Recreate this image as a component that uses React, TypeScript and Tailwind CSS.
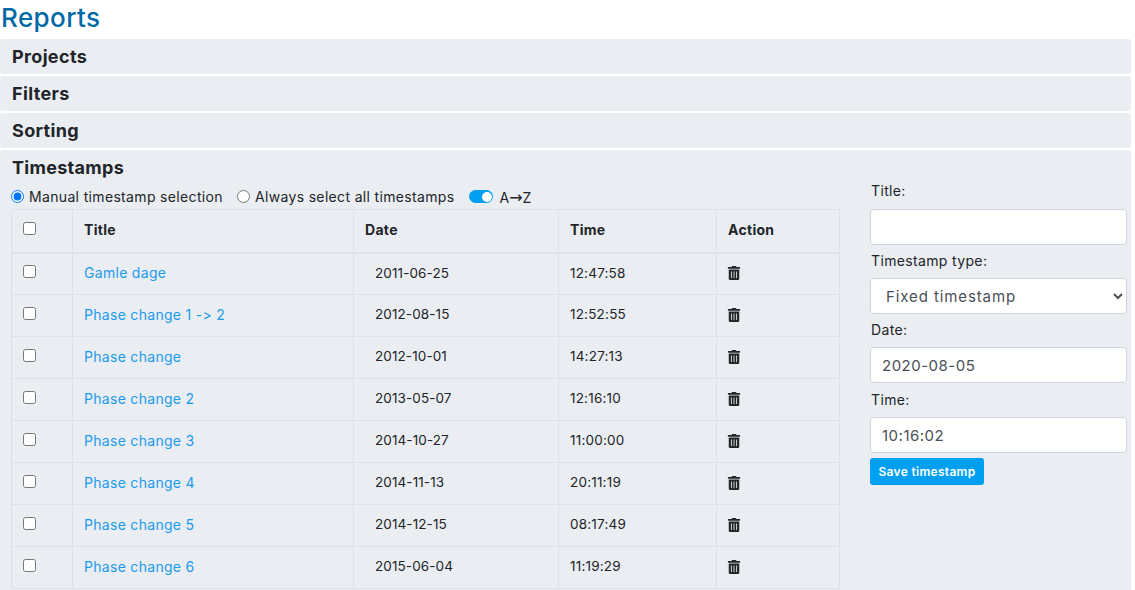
import React from 'react';
import { FaTrashAlt } from 'react-icons/fa';

const rows = [
  { title: 'Gamle dage', date: '2011-06-25', time: '12:47:58' },
  { title: 'Phase change 1 -> 2', date: '2012-08-15', time: '12:52:55' },
  { title: 'Phase change', date: '2012-10-01', time: '14:27:13' },
  { title: 'Phase change 2', date: '2013-05-07', time: '12:16:10' },
  { title: 'Phase change 3', date: '2014-10-27', time: '11:00:00' },
  { title: 'Phase change 4', date: '2014-11-13', time: '20:11:19' },
  { title: 'Phase change 5', date: '2014-12-15', time: '08:17:49' },
  { title: 'Phase change 6', date: '2015-06-04', time: '11:19:29' },
];

const Panel = ({ title }: { title: string }) => (
  <div className="h-[35px] rounded-[3px] bg-[#eaedf1] pl-3 pt-[5px] text-[18px] leading-[26px] font-bold tracking-[0.35px] text-[#212529]">
    {title}
  </div>
);

const inputClass =
  'block h-[36px] w-[257px] rounded-[4px] border border-[#ced4da] bg-white px-[11px] text-[15px] tracking-[0.5px] text-[#495057]';

const labelClass = 'block pl-[1px] leading-[20px] tracking-[0.35px]';
const thClass = 'border border-b-2 border-[#dee2e6] pb-[2px] pl-[11px] text-left font-bold tracking-[0.3px]';
const tdClass = 'border border-[#dee2e6] pb-[2px]';

export default function App() {
  return (
    <div className="h-[590px] w-[1135px] overflow-hidden bg-white font-['Inter',sans-serif] text-[#212529] [font-feature-settings:'calt'_0]">
      <h1 className="h-[39px] pl-[1px] pt-[2px] text-[26px] leading-[32px] font-medium tracking-[0.4px] text-[#0069a6]">Reports</h1>
      <div className="flex w-[1131px] flex-col gap-[2px]">
        <Panel title="Projects" />
        <Panel title="Filters" />
        <Panel title="Sorting" />
        <div className="h-[500px] rounded-[3px] bg-[#eaedf1]">
          <div className="pl-3 pt-[5px] text-[18px] leading-[26px] font-bold tracking-[0.3px]">Timestamps</div>
          <div className="flex">
            <div className="ml-[11px] w-[829px]">
              <div className="flex h-[28px] items-center pt-[3px] text-[14px] tracking-[0.34px]">
                <label className="flex items-center gap-[5px]">
                  <input type="radio" name="sel" defaultChecked className="m-0 h-[13px] w-[13px] accent-[#0075ff]" />
                  Manual timestamp selection
                </label>
                <label className="ml-[14px] flex items-center gap-[5px]">
                  <input type="radio" name="sel" className="m-0 h-[13px] w-[13px]" />
                  Always select all timestamps
                </label>
                <span className="ml-[14px] flex h-[13px] w-[24px] items-center justify-end rounded-full bg-[#009ff0] pr-[1px]">
                  <span className="h-[10px] w-[10px] rounded-full bg-white" />
                </span>
                <span className="ml-[7px] mt-[2px] tracking-normal">
                  A<span className="font-['DejaVu_Sans',sans-serif] text-[16px] leading-[14px]">→</span>Z
                </span>
              </div>
              <table className="w-[828px] table-fixed border-collapse text-[14px]">
                <colgroup>
                  <col className="w-[61px]" />
                  <col className="w-[281px]" />
                  <col className="w-[205px]" />
                  <col className="w-[158px]" />
                  <col className="w-[123px]" />
                </colgroup>
                <thead>
                  <tr className="h-[43px]">
                    <th className="border border-b-2 border-[#dee2e6] pb-[4px] pl-[11px] text-left align-middle">
                      <input type="checkbox" className="m-0 block h-[13px] w-[13px]" />
                    </th>
                    <th className={thClass}>Title</th>
                    <th className={thClass}>Date</th>
                    <th className={thClass}>Time</th>
                    <th className={thClass}>Action</th>
                  </tr>
                </thead>
                <tbody>
                  {rows.map((r) => (
                    <tr key={r.title} className="h-[42px]">
                      <td className="border border-[#dee2e6] pb-[4px] pl-[11px]">
                        <input type="checkbox" className="m-0 block h-[13px] w-[13px]" />
                      </td>
                      <td className={`${tdClass} pl-[11px] tracking-[0.3px] text-[#1a9bef]`}>{r.title}</td>
                      <td className={`${tdClass} pl-[21px] text-[13.5px] tracking-[0.1px]`}>{r.date}</td>
                      <td className={`${tdClass} pl-[11px] text-[13.5px] tracking-[0.2px]`}>{r.time}</td>
                      <td className={`${tdClass} pl-[10px]`}>
                        <FaTrashAlt className="text-[14px]" />
                      </td>
                    </tr>
                  ))}
                </tbody>
              </table>
            </div>
            <div className="ml-[30px] w-[257px] text-[14px]">
              <label className={`${labelClass} h-[28px]`}>Title:</label>
              <input type="text" className={inputClass} />
              <label className={`${labelClass} h-[33px] pt-[6px]`}>Timestamp type:</label>
              <select defaultValue="fixed" className={`${inputClass} tracking-[0.9px]`}>
                <option value="fixed">Fixed timestamp</option>
              </select>
              <label className={`${labelClass} h-[33px] pt-[6px]`}>Date:</label>
              <input type="text" defaultValue="2020-08-05" className={inputClass} />
              <label className={`${labelClass} h-[34px] pt-[7px]`}>Time:</label>
              <input type="text" defaultValue="10:16:02" className={`${inputClass} tracking-[0.3px]`} />
              <button className="mt-[5px] h-[27px] w-[114px] rounded-[3px] bg-[#009ff0] text-[12px] font-semibold tracking-[0.3px] text-white">
                Save timestamp
              </button>
            </div>
          </div>
        </div>
      </div>
    </div>
  );
}
